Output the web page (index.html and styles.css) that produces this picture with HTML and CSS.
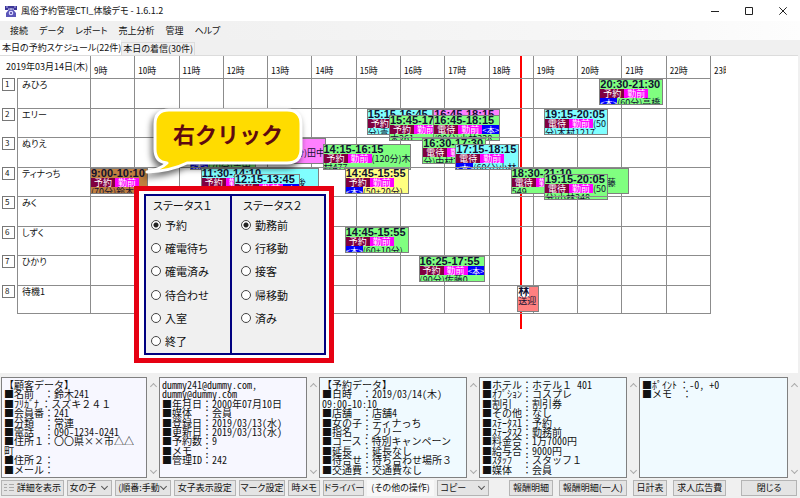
FILE: index.html
```html
<!DOCTYPE html>
<html lang="ja">
<head>
<meta charset="utf-8">
<title>風俗予約管理CTI_体験デモ - 1.6.1.2</title>
<link rel="stylesheet" href="styles.css">
</head>
<body>
<div class="window">
  <header class="titlebar">
    <svg class="app-icon" viewBox="0 0 12 12" aria-hidden="true">
      <path d="M0 1h12v4H9V3.500H3V5H0z" fill="#3c3698"/>
      <path d="M3.500 3h1v1.500h3V3h1v2l2.500 3v4H1V8l2.500-3z" fill="#5a55b8"/>
      <path d="M1 2h2M9 2h2" stroke="#b9b5f0"/>
      <circle cx="6" cy="8" r="2.300" fill="#d9d7ff"/>
      <circle cx="6" cy="8" r="1" fill="#3c3698"/>
    </svg>
    <h1>風俗予約管理CTI_体験デモ - 1.6.1.2</h1>
    <div class="window-controls">
      <button type="button" aria-label="最小化"><svg viewBox="0 0 8 8"><path d="M0 4.500h8"/></svg></button>
      <button type="button" aria-label="最大化"><svg viewBox="0 0 8 8"><path d="M.5.5h7v7h-7z"/></svg></button>
      <button type="button" aria-label="閉じる"><svg viewBox="0 0 8 8"><path d="M.3.3l7.400 7.400M7.700.3L.3 7.700"/></svg></button>
    </div>
  </header>

  <nav class="menubar">
    <button type="button">接続</button>
    <button type="button">データ</button>
    <button type="button">レポート</button>
    <button type="button">売上分析</button>
    <button type="button">管理</button>
    <button type="button">ヘルプ</button>
  </nav>

  <div class="tabs" role="tablist">
    <button type="button" role="tab" class="tab active" aria-selected="true">本日の予約スケジュール(22件)</button>
    <button type="button" role="tab" class="tab" aria-selected="false">本日の着信(30件)</button>
  </div>

  <main class="board">
    <div class="now-layer"><i class="now" style="left:69.3%"></i></div>
    <table class="schedule">
      <colgroup><col class="c-no"><col class="c-name"><col span="14"><col class="c-last"></colgroup>
      <thead>
        <tr>
          <th class="date" colspan="2">2019年03月14日(木)</th>
          <th>9時</th><th>10時</th><th>11時</th><th>12時</th><th>13時</th><th>14時</th><th>15時</th><th>16時</th><th>17時</th><th>18時</th><th>19時</th><th>20時</th><th>21時</th><th>22時</th>
          <th><span class="cut">23時</span></th>
        </tr>
      </thead>
      <tbody>
        <tr>
          <td class="no"><span>1</span></td><th class="name">みひろ</th>
          <td></td><td></td><td></td><td></td><td></td><td></td><td></td><td></td><td></td><td></td><td></td><td></td><td></td><td></td>
          <td class="last"><div class="lane">
            <div class="ev green" style="--s:11.5;--d:1"><b>20:30-21:30</b><em class="st">予約</em><em class="wk">勤前</em><br><em class="hon">&lt;本&gt;</em>(60分)高橋</div>
          </div></td>
        </tr>
        <tr>
          <td class="no"><span>2</span></td><th class="name">エリー</th>
          <td></td><td></td><td></td><td></td><td></td><td></td><td></td><td></td><td></td><td></td><td></td><td></td><td></td><td></td>
          <td class="last"><div class="lane">
            <div class="ev cyan" style="--s:6.25;--d:1.5"><b>15:15-16:45</b><em class="st">予約</em><br>分)青</div>
            <div class="ev pink" style="--s:7.75;--d:1.5"><b>16:45-18:15</b></div>
            <div class="ev green low" style="--s:6.75;--d:1.5"><b>15:45-17:15</b><em class="st">予約</em><em class="wk">勤前</em><br>木261</div>
            <div class="ev green low" style="--s:7.75;--d:1.5"><b>16:45-18:15</b><em class="st">電待</em><em class="wk">勤前</em><em class="hon">&lt;本&gt;</em><br>(90分)小林328</div>
            <div class="ev cyan" style="--s:10.25;--d:.83"><b>19:15-20:05</b><em class="st">電待</em><em class="wk">勤前</em>(50<br>分)木村1217</div>
          </div></td>
        </tr>
        <tr>
          <td class="no"><span>3</span></td><th class="name">ぬりえ</th>
          <td></td><td></td><td></td><td></td><td></td><td></td><td></td><td></td><td></td><td></td><td></td><td></td><td></td><td></td>
          <td class="last"><div class="lane">
            <div class="ev green low bottom" style="--s:2.25;--d:1.5"><em class="hon">&lt;本&gt;</em>(70分)吉田</div>
            <div class="ev pink tail" style="--s:3.33;--d:2">分)田中</div>
            <div class="ev green low" style="--s:5.25;--d:2"><b>14:15-16:15</b><em class="st">予約</em><em class="wk">勤前</em>(120分)木<br>村477</div>
            <div class="ev green" style="--s:7.5;--d:1"><b>16:30-17:30</b><em class="st">電待</em><em class="wk">勤前</em><br>分)中村7</div>
            <div class="ev cyan low" style="--s:8.25;--d:1"><b>17:15-18:15</b><em class="st">電待</em><em class="wk">勤前</em><br><em class="hon">&lt;本&gt;</em>(60分)小林</div>
          </div></td>
        </tr>
        <tr>
          <td class="no"><span>4</span></td><th class="name">ティナっち</th>
          <td></td><td></td><td></td><td></td><td></td><td></td><td></td><td></td><td></td><td></td><td></td><td></td><td></td><td></td>
          <td class="last"><div class="lane">
            <div class="ev orange" style="--s:0;--d:1.3"><b>9:00-10:10</b><em class="st">予約</em><em class="wk">勤前</em><br>(70分)鈴木2</div>
            <div class="ev cyan" style="--s:2.5;--d:2.67"><b>11:30-14:10</b><em class="st">予約</em><em class="wk">勤前</em><em class="hon"></em>(160分)後<br>543</div>
            <div class="ev cyan low" style="--s:3.25;--d:1.5"><b>12:15-13:45</b><em class="st">予約</em><em class="wk">勤前</em><em class="hon">&lt;本&gt;</em></div>
            <div class="ev yellow" style="--s:5.75;--d:1"><b>14:45-15:55</b><em class="st">予約</em><em class="wk">勤前</em><br><em class="hon">&lt;本&gt;</em>(50+20分)</div>
            <div class="ev green" style="--s:9.5;--d:2.67"><b>18:30-21:10</b><em class="st">電待</em><em class="wk">勤前</em><em class="hon"></em>(160分)藤<br>549</div>
            <div class="ev green low" style="--s:10.25;--d:.83"><b>19:15-20:05</b><em class="st">電待</em><em class="wk">勤前</em>(50<br>分)小林348</div>
          </div></td>
        </tr>
        <tr>
          <td class="no"><span>5</span></td><th class="name">みく</th>
          <td></td><td></td><td></td><td></td><td></td><td></td><td></td><td></td><td></td><td></td><td></td><td></td><td></td><td></td>
          <td class="last"></td>
        </tr>
        <tr>
          <td class="no"><span>6</span></td><th class="name">しずく</th>
          <td></td><td></td><td></td><td></td><td></td><td></td><td></td><td></td><td></td><td></td><td></td><td></td><td></td><td></td>
          <td class="last"><div class="lane">
            <div class="ev green" style="--s:5.75;--d:1"><b>14:45-15:55</b><em class="st">予約</em><em class="wk">勤前</em><br><em class="hon">&lt;本&gt;</em>(60+10分)</div>
          </div></td>
        </tr>
        <tr>
          <td class="no"><span>7</span></td><th class="name">ひかり</th>
          <td></td><td></td><td></td><td></td><td></td><td></td><td></td><td></td><td></td><td></td><td></td><td></td><td></td><td></td>
          <td class="last"><div class="lane">
            <div class="ev green" style="--s:7.42;--d:1.5"><b>16:25-17:55</b><em class="st">予約</em><em class="wk">勤前</em><em class="hon">&lt;本&gt;</em><br>(90分)佐藤0</div>
          </div></td>
        </tr>
        <tr>
          <td class="no"><span>8</span></td><th class="name">待機1</th>
          <td></td><td></td><td></td><td></td><td></td><td></td><td></td><td></td><td></td><td></td><td></td><td></td><td></td><td></td>
          <td class="last"><div class="lane">
            <div class="ev red" style="--s:9.65;--d:.5"><b><mark>林</mark></b>送迎</div>
          </div></td>
        </tr>
      </tbody>
    </table>

    <form class="status-menu">
      <fieldset>
        <legend>ステータス１</legend>
        <label><input type="radio" name="s1" checked>予約</label>
        <label><input type="radio" name="s1">確電待ち</label>
        <label><input type="radio" name="s1">確電済み</label>
        <label><input type="radio" name="s1">待合わせ</label>
        <label><input type="radio" name="s1">入室</label>
        <label><input type="radio" name="s1">終了</label>
      </fieldset>
      <fieldset>
        <legend>ステータス２</legend>
        <label><input type="radio" name="s2" checked>勤務前</label>
        <label><input type="radio" name="s2">行移動</label>
        <label><input type="radio" name="s2">接客</label>
        <label><input type="radio" name="s2">帰移動</label>
        <label><input type="radio" name="s2">済み</label>
      </fieldset>
    </form>

    <div class="callout">
      <svg viewBox="0 0 160 72" aria-hidden="true">
        <path d="M24 3H142Q156 3 156 17V42Q156 56 142 56H42Q26 64 2 65Q16 62 22 56Q10 55 10 42V17Q10 3 24 3Z" fill="#ffdc00" stroke="#fff" stroke-width="3" stroke-linejoin="round"/>
      </svg>
      <strong>右クリック</strong>
    </div>
  </main>

  <section class="details">
    <div class="pane-wrap">
      <div class="pane lilac" tabindex="0">
        <p>【顧客データ】</p>
        <p>■名前　：鈴木<span>241</span></p>
        <p>■ﾌﾘｶﾞﾅ ：スズキ２４１</p>
        <p>■会員番：<span>241</span></p>
        <p>■分類　：常連</p>
        <p>■電話　：<span>090-1234-0241</span></p>
        <p>■住所１：〇〇県××市△△</p>
        <p>町</p>
        <p>■住所２：</p>
        <p>■メール：</p>
      </div>
      <div class="scroll"></div>
    </div>
    <div class="pane-wrap">
      <div class="pane lilac" tabindex="0">
        <p><span>dummy241@dummy.com,</span></p>
        <p><span>dummy@dummy.com</span></p>
        <p>■年月日：<span>2000</span>年<span>07</span>月<span>10</span>日</p>
        <p>■媒体　：会員</p>
        <p>■登録日：<span>2019/03/13(</span>水<span>)</span></p>
        <p>■更新日：<span>2019/03/13(</span>水<span>)</span></p>
        <p>■予約数：<span>9</span></p>
        <p>■メモ　：</p>
        <p>■管理<span>ID</span>：<span>242</span></p>
      </div>
      <div class="scroll"></div>
    </div>
    <div class="pane-wrap">
      <div class="pane" tabindex="0">
        <p>【予約データ】</p>
        <p>■日時　：<span>2019/03/14(</span>木<span>)</span></p>
        <p><span>09:00-10:10</span></p>
        <p>■店舗　：店舗<span>4</span></p>
        <p>■女の子：ティナっち</p>
        <p>■指名　：フリー</p>
        <p>■コース：特別キャンペーン</p>
        <p>■延長　：延長なし</p>
        <p>■待合せ：待ち合わせ場所３</p>
        <p>■交通費：交通費なし</p>
      </div>
      <div class="scroll"></div>
    </div>
    <div class="pane-wrap">
      <div class="pane" tabindex="0">
        <p>■ホテル：ホテル１<span> 401</span></p>
        <p>■ｵﾌﾟｼｮﾝ：コスプレ</p>
        <p>■割引　：割引券</p>
        <p>■その他：なし</p>
        <p>■ｽﾃｰﾀｽ<span>1</span>：予約</p>
        <p>■ｽﾃｰﾀｽ<span>2</span>：勤務前</p>
        <p>■料金合：<span>1</span>万<span>7000</span>円</p>
        <p>■給与合：<span>9000</span>円</p>
        <p>■ｽﾀｯﾌ　：スタッフ１</p>
        <p>■媒体　：会員</p>
      </div>
      <div class="scroll"></div>
    </div>
    <div class="pane-wrap">
      <div class="pane" tabindex="0">
        <p>■ﾎﾟｲﾝﾄ ：<span>-0, +0</span></p>
        <p>■メモ　：</p>
      </div>
      <div class="scroll"></div>
    </div>
  </section>

  <footer class="toolbar">
    <div class="tools main-tools">
      <button type="button" class="with-icon"><svg viewBox="0 0 10 10" aria-hidden="true"><path d="M0 1.500h3M0 4.500h3M0 7.500h3M5 1.500h5M5 4.500h5M5 7.500h5"/></svg>詳細を表示</button>
      <span class="drop"><select aria-label="表示対象"><option>女の子</option></select></span>
      <span class="drop"><select aria-label="並び順"><option>(順番:手動)</option></select></span>
      <button type="button">女子表示設定</button>
      <button type="button">マーク設定</button>
      <button type="button">時メモ</button>
      <button type="button">ドライバー</button>
      <label for="other">(その他の操作)</label>
      <span class="drop"><select id="other"><option>コピー</option></select></span>
    </div>
    <div class="tools report-tools">
      <button type="button">報酬明細</button>
      <button type="button">報酬明細(一人)</button>
      <button type="button">日計表</button>
      <button type="button">求人広告費</button>
    </div>
    <button type="button" class="close">閉じる</button>
  </footer>
</div>
</body>
</html>
```
FILE: styles.css
```css
* { box-sizing: border-box; }

body {
  margin: 0;
  background: #f0f0f0;
  color: #111;
  font: 9px/12px "Noto Sans CJK JP", sans-serif;
  font-feature-settings: "palt";
}

button, select, input {
  margin: 0;
  padding: 0;
  border: 0;
  background: none;
  color: inherit;
  font: inherit;
  font-feature-settings: inherit;
  white-space: nowrap;
}

.window {
  display: flex;
  flex-direction: column;
  min-height: 100vh;
}

/* Title bar and menus */
.titlebar {
  display: flex;
  align-items: center;
  height: 21px;
  padding-left: 5px;
  background: #fff;
}
.app-icon { width: 12px; height: 12px; }
.titlebar h1 {
  flex: 1;
  margin: 0 0 0 4px;
  font-size: 9px;
  font-weight: 400;
}
.window-controls { display: flex; }
.window-controls button { width: 34px; height: 20px; line-height: 0; }
.window-controls svg {
  width: 8px;
  height: 8px;
  fill: none;
  stroke: #222;
}
.menubar {
  display: flex;
  gap: 11px;
  height: 19px;
  padding-left: 10px;
  background: linear-gradient(90deg, #f0f0f0 20%, #f7f7f7 75%, #fdfdfd);
}
.tabs {
  display: flex;
  align-items: flex-end;
  height: 15px;
}
.tab {
  height: 13px;
  padding: 0 1px;
  border: 1px solid #dcdcdc;
  border-bottom: 0;
}
.tab.active {
  height: 15px;
  padding: 0 0 0 2px;
  border: 0;
  background: #fff;
}

/* Schedule */
.board {
  position: relative;
  flex: 1;
  margin-right: 2px;
  border-top: 1px solid #dcdcdc;
  background: #fff;
}
.schedule {
  position: relative;
  width: calc(100% + 2px);
  table-layout: fixed;
  border-collapse: separate;
  border-spacing: 0;
}
.c-no { width: 17px; }
.c-name { width: 73px; }
.c-last { width: 90px; }
.schedule th, .schedule td {
  padding: 0;
  border-left: 1px solid #8c8c8c;
  font-weight: 400;
  text-align: left;
  vertical-align: top;
}
.schedule thead th {
  height: 22px;
  padding: 9px 0 0 3px;
  font-feature-settings: "hwid";
}
.schedule thead .date {
  padding: 5px 2px 0 0;
  border-left: 0;
  text-align: right;
  font-feature-settings: "palt";
}
.cut {
  display: block;
  width: 12px;
  overflow: hidden;
  white-space: nowrap;
}
.schedule tbody tr { position: relative; height: 30px; }
.schedule tbody tr:nth-child(even) { height: 29px; }
.schedule tbody td, .schedule tbody th { border-top: 1px solid #8c8c8c; }
.schedule tbody tr:last-child > * { border-bottom: 1px solid #8c8c8c; }
.schedule tbody tr > .no, .schedule tbody tr > .last { border-top: 0; }
.schedule tbody tr:last-child > .no, .schedule tbody tr:last-child > .last { border-bottom: 0; }
.schedule tbody .no { border-left: 0; }
.no span {
  display: block;
  width: 13px;
  height: 13px;
  margin-left: 2px;
  padding-left: 2px;
  border: 1px solid #777;
  font-size: 8px;
  line-height: 10px;
}
.schedule tbody .name { padding-left: 4px; }

.now-layer {
  position: absolute;
  top: 0;
  left: 90px;
  right: 88px;
  height: 273px;
}
.now {
  position: absolute;
  width: 2px;
  height: 100%;
  background: #f00;
}

.lane {
  position: absolute;
  top: 1px;
  left: 90px;
  right: 90px;
}
.ev {
  position: absolute;
  top: 0;
  left: calc(var(--s) * 100% / 14);
  width: calc(var(--d) * 100% / 14);
  min-width: 64px;
  height: 26px;
  overflow: hidden;
  border: 1px solid #808080;
  color: #101030;
  line-height: 9px;
  white-space: nowrap;
}
.ev.low { top: 6px; }
.ev.bottom { padding-top: 17px; }
.ev.tail { padding-top: 9px; text-align: right; }
.ev b {
  display: block;
  font: bold 11px/9px "Liberation Sans", "Noto Sans CJK JP", sans-serif;
}
.ev em {
  display: inline-block;
  width: 24px;
  height: 9px;
  color: #fff;
  font-style: normal;
  text-align: center;
  vertical-align: top;
}
.ev mark { background: #fff; color: inherit; }
.ev .st { background: #800040; }
.ev .wk { background: #f0f; }
.ev .hon { width: 17px; background: #00f; font-size: 8px; }
.green { background: #80ff80; }
.cyan { background: #80ffff; }
.pink { background: #ff80ff; }
.yellow { background: #ffff80; }
.ev.orange { min-width: 0; background: #c08040; }
.ev.red { min-width: 0; background: #ff8080; }

/* Status context menu */
.status-menu {
  position: absolute;
  top: 130px;
  left: 134px;
  display: grid;
  grid-template-columns: 88px 94px;
  height: 177px;
  padding: 3px 3px 3px 5px;
  border: 5px solid #e60012;
  background: #fff;
}
.status-menu fieldset {
  display: grid;
  grid-template-rows: 16px repeat(6, 1fr);
  align-items: center;
  min-width: 0;
  margin: 0;
  padding: 1px 0 0 5px;
  border: 2px solid #000080;
  background: #f0f0f0;
  font-size: 11px;
}
.status-menu fieldset + fieldset { margin-left: -2px; padding-left: 9px; }
.status-menu legend {
  float: left;
  padding: 0 0 0 2px;
}
.status-menu label {
  display: flex;
  align-items: center;
  gap: 4px;
}
.status-menu input {
  width: 10px;
  height: 10px;
  border: 1px solid #444;
  border-radius: 50%;
  background: #fff;
  appearance: none;
}
.status-menu input:checked {
  background: radial-gradient(circle, #222 2px, #fff 3px);
}

.callout {
  position: absolute;
  top: 51px;
  left: 145px;
  width: 160px;
  height: 72px;
}
.callout svg {
  position: absolute;
  width: 160px;
  height: 72px;
  overflow: visible;
  filter: drop-shadow(-2px 4px 3px rgba(0, 0, 0, .6));
}
.callout strong {
  position: relative;
  display: block;
  padding: 11px 0 0 28px;
  color: #5f0a10;
  font-size: 22px;
  font-weight: 700;
  line-height: 30px;
  font-feature-settings: normal;
}

/* Detail panes */
.details {
  display: grid;
  grid-template-columns: 159fr 160fr 160fr 160fr 161fr;
  padding-top: 4px;
}
.pane-wrap { display: flex; }
.pane-wrap:first-child { padding-left: 1px; }
.pane {
  display: grid;
  grid-template-rows: repeat(10, 1fr);
  flex: 1;
  min-width: 0;
  height: 101px;
  padding: 2px 0 3px 2px;
  border: 1px solid #808080;
  background: #f0faff;
  font-size: 10px;
  font-feature-settings: normal;
  line-height: 9px;
  white-space: pre;
}
.pane.lilac { background: #f7f7ff; }
.pane p { margin: 0; }
.pane span { font-feature-settings: "hwid"; }
.scroll {
  display: flex;
  flex-direction: column;
  align-items: center;
  justify-content: space-between;
  width: 12px;
  padding: 7px 0 5px;
}
.scroll::before, .scroll::after {
  width: 4px;
  height: 4px;
  border: solid #aaa;
  border-width: 1px 0 0 1px;
  content: "";
  transform: rotate(45deg);
}
.scroll::after { transform: rotate(225deg); }

/* Bottom toolbar */
.toolbar {
  display: flex;
  height: 20px;
  padding: 2px 3px 2px 1px;
}
.tools { display: grid; gap: 3px; }
.main-tools {
  flex: 490;
  grid-template-columns: 63fr 46fr 56fr 62fr 47fr 32fr 41fr 68fr 52fr;
}
.report-tools {
  flex: 218;
  gap: 6px;
  grid-template-columns: 44fr 68fr 35fr 53fr;
  margin-left: 20px;
}
.close { flex: 54; margin-left: 15px; }
.tools > *, .toolbar .close {
  min-width: 0;
  height: 16px;
  border: 1px solid #b4b4b4;
  background: #e4e4e4;
  line-height: 14px;
  text-align: center;
  white-space: nowrap;
}
.tools label { border-color: #f8f8f8; background: #f8f8f8; }
.with-icon svg {
  width: 10px;
  height: 10px;
  margin-right: 3px;
  fill: none;
  stroke: #aaa;
  vertical-align: -2px;
}
.drop { position: relative; }
.drop select {
  display: block;
  width: 100%;
  height: 14px;
  padding: 0 10px 0 2px;
  appearance: none;
}
.drop::after {
  position: absolute;
  top: 3px;
  right: 4px;
  width: 4px;
  height: 4px;
  border: solid #555;
  border-width: 0 1px 1px 0;
  content: "";
  transform: rotate(45deg);
}
```
